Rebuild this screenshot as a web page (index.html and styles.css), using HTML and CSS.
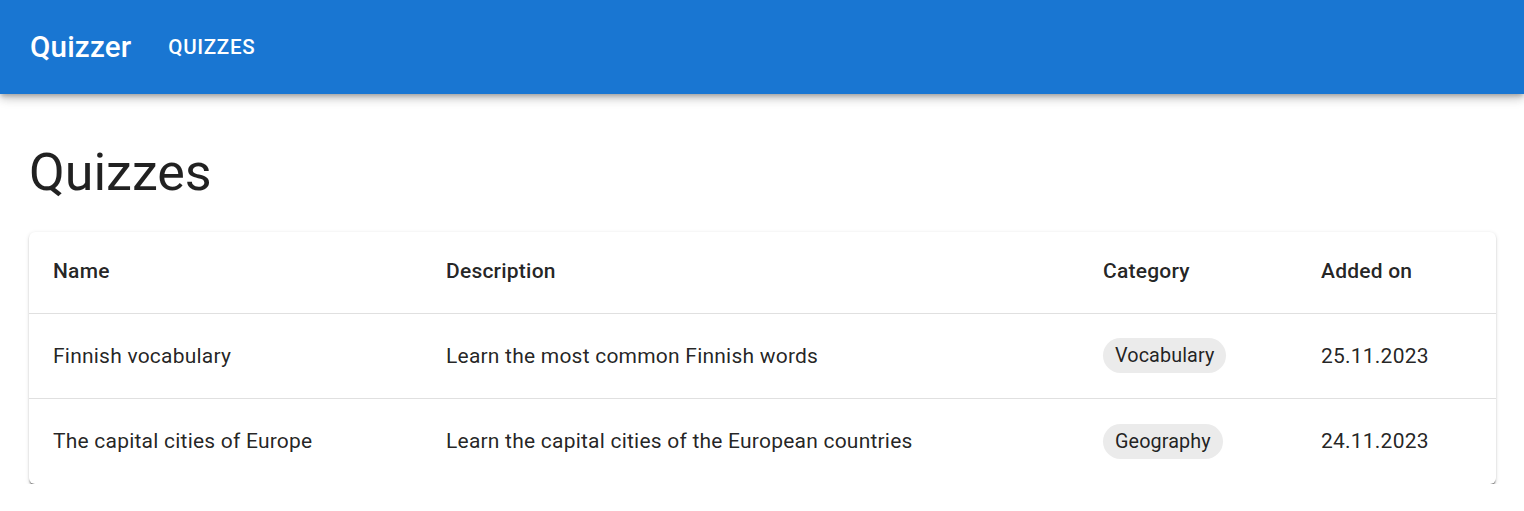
FILE: index.html
```html
<!DOCTYPE html>
<html>
<head>
<meta charset="utf-8">
<link rel="stylesheet" href="styles.css">
</head>
<body>
<header class="appbar">
  <div class="brand">Quizzer</div>
  <nav class="nav"><a class="nav-link">QUIZZES</a></nav>
</header>
<main class="container">
  <h1 class="title">Quizzes</h1>
  <div class="card">
    <table class="table">
      <colgroup>
        <col class="c1"><col class="c2"><col class="c3"><col class="c4">
      </colgroup>
      <thead>
        <tr><th>Name</th><th>Description</th><th>Category</th><th>Added on</th></tr>
      </thead>
      <tbody>
        <tr><td>Finnish vocabulary</td><td>Learn the most common Finnish words</td><td><span class="chip">Vocabulary</span></td><td>25.11.2023</td></tr>
        <tr class="last"><td>The capital cities of Europe</td><td>Learn the capital cities of the European countries</td><td><span class="chip">Geography</span></td><td>24.11.2023</td></tr>
      </tbody>
    </table>
  </div>
</main>
</body>
</html>
```
FILE: styles.css
```css
* { box-sizing: border-box; }
html, body { margin: 0; padding: 0; background: #fff; }
body { font-family: Roboto, "Noto Sans", sans-serif; color: rgba(0,0,0,0.87); }

.appbar {
  height: 94px;
  background: #1976d2;
  color: #fff;
  display: flex;
  align-items: center;
  padding: 0 30px;
  gap: 37px;
  box-shadow: 0 3px 4px -1px rgba(0,0,0,0.2), 0 5px 8px 0 rgba(0,0,0,0.14), 0 2px 14px 0 rgba(0,0,0,0.12);
}
.brand { font-size: 29.5px; font-weight: 500; letter-spacing: 0.2px; }
.nav-link { font-size: 20.5px; font-weight: 500; letter-spacing: 0.7px; }

.container { padding: 0 28px 0 29px; }
.title {
  margin: 0;
  padding-top: 47px;
  height: 138px;
  font-size: 52px;
  font-weight: 400;
  line-height: 64px;
}
.card {
  background: #fff;
  border-radius: 6px;
  box-shadow: 0 3px 1.5px -1px rgba(0,0,0,0.38), 0 1.5px 1.5px 0 rgba(0,0,0,0.16), 0 1.5px 4.5px 0 rgba(0,0,0,0.12);
  overflow: hidden;
}
.table { width: 100%; border-collapse: collapse; table-layout: fixed; }
.c1 { width: 393px; }
.c2 { width: 657px; }
.c3 { width: 218px; }
.c4 { width: auto; }
th, td {
  text-align: left;
  padding: 0 24px;
  font-size: 21px;
  letter-spacing: 0.22px;
  border-bottom: 1px solid #e0e0e0;
  white-space: nowrap;
}
th { height: 81px; font-weight: 500; padding-bottom: 2px; }
td { height: 85px; font-weight: 400; }
tr.last td { border-bottom: none; height: 86px; }
.chip {
  display: inline-flex;
  align-items: center;
  height: 35px;
  padding: 0 12px;
  border-radius: 18px;
  background: #ebebeb;
  font-size: 19.8px;
  letter-spacing: 0.1px;
}
```
